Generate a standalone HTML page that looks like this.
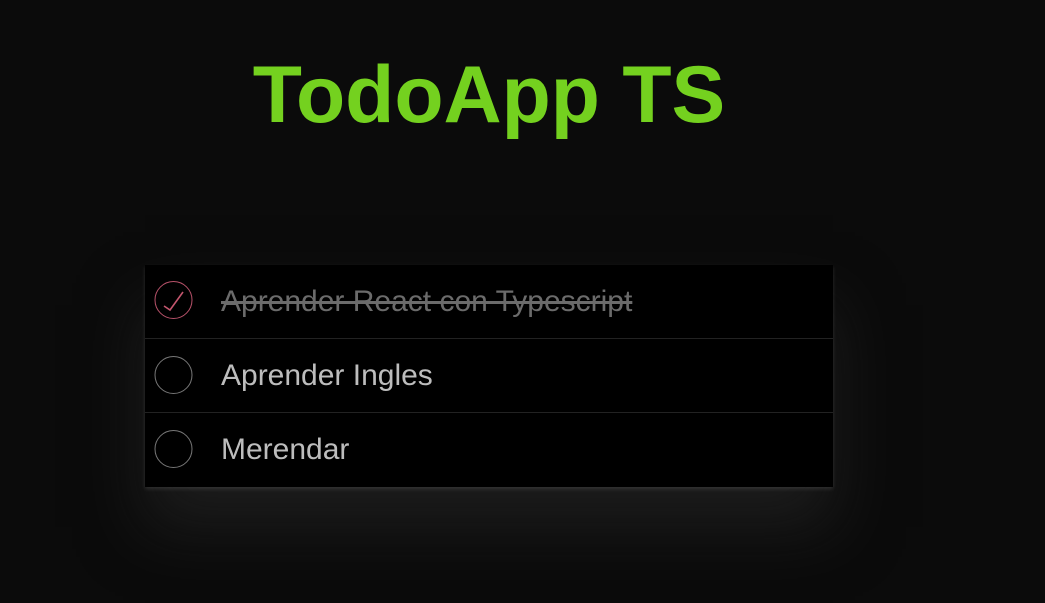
<!DOCTYPE html>
<html><head><style>
html,body{margin:0;padding:0;width:1045px;height:603px;overflow:hidden;background:#0b0b0b;font-family:"Liberation Sans",Arial,sans-serif}
h1{position:absolute;left:0;width:978px;top:48px;margin:0;text-align:center;font-size:80.5px;font-weight:bold;color:#74d11f;line-height:94px}
.box{position:absolute;left:145px;top:265px;width:688px;height:222px;background:#000;box-shadow:0 2px 4px rgba(255,255,255,.12),0 40px 60px 0 rgba(45,45,45,.5)}
.row{position:relative;height:74px;border-bottom:1px solid #222;box-sizing:border-box}
.row:last-child{border-bottom:none}
.row svg{position:absolute;left:8px;top:15px}
.row span{position:absolute;left:76px;top:20px;font-size:30px;color:#bdbdbd;line-height:34px}
.done span{color:#6b6b6b;text-decoration:line-through}
</style></head><body>
<h1>TodoApp TS</h1>
<div class="box">
<div class="row done"><svg width="42" height="42"><circle cx="20.5" cy="20" r="18.5" fill="none" stroke="#b8526a" stroke-width="1"/><path d="M11 26 L17 30 L30 12" fill="none" stroke="#c4566e" stroke-width="1.6"/></svg><span>Aprender React con Typescript</span></div>
<div class="row"><svg width="42" height="42"><circle cx="20.5" cy="21" r="18.5" fill="none" stroke="#777" stroke-width="1"/></svg><span>Aprender Ingles</span></div>
<div class="row"><svg width="42" height="42"><circle cx="20.5" cy="21" r="18.5" fill="none" stroke="#777" stroke-width="1"/></svg><span>Merendar</span></div>
</div>
</body></html>
